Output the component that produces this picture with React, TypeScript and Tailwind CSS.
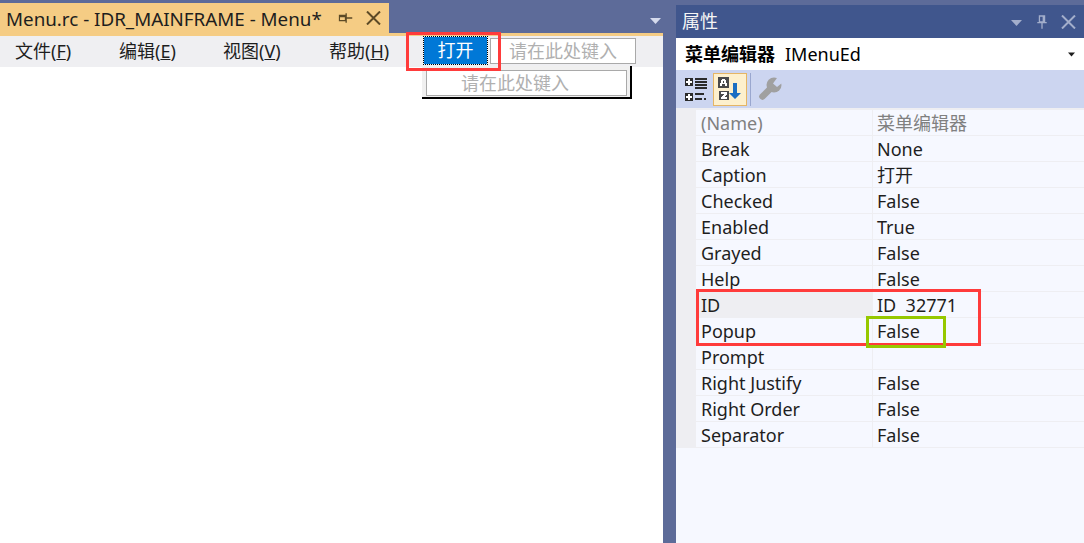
const menus = [
  { label: "文件(", key: "F", width: "w-[104px]" },
  { label: "编辑(", key: "E", width: "w-[104px]" },
  { label: "视图(", key: "V", width: "w-[106px]" },
  { label: "帮助(", key: "H", width: "w-[70px]" },
];

const props = [
  { name: "(Name)", value: "菜单编辑器", muted: true },
  { name: "Break", value: "None" },
  { name: "Caption", value: "打开" },
  { name: "Checked", value: "False" },
  { name: "Enabled", value: "True" },
  { name: "Grayed", value: "False" },
  { name: "Help", value: "False" },
  { name: "ID", value: "ID  32771", selected: true },
  { name: "Popup", value: "False" },
  { name: "Prompt", value: "" },
  { name: "Right Justify", value: "False" },
  { name: "Right Order", value: "False" },
  { name: "Separator", value: "False" },
];

function PinIcon({ className }: { className: string }) {
  return (
    <svg width="14" height="16" viewBox="0 0 14 16" className={className} fill="none" stroke="currentColor" strokeWidth="1.5">
      <path d="M4 1h6v7H4zM8.500 1v7M1.500 8.750h11M7 9v7" />
    </svg>
  );
}

function CloseIcon({ className }: { className: string }) {
  return (
    <svg width="15" height="14" viewBox="0 0 15 14" className={className} fill="none" stroke="currentColor" strokeWidth="2">
      <path d="M1 .5l13 13M14 .5l-13 13" />
    </svg>
  );
}

function Caret({ className }: { className: string }) {
  return (
    <svg width="11" height="6" viewBox="0 0 11 6" className={className} fill="currentColor">
      <path d="M0 0h11L5.500 6z" />
    </svg>
  );
}

function CategorizedIcon() {
  return (
    <svg width="22" height="23" viewBox="0 0 22 23" shapeRendering="crispEdges">
      <rect x="0" y="0" width="8" height="8" fill="#2b2b2b" />
      <rect x="1" y="3" width="6" height="2" fill="#fff" />
      <rect x="3" y="1" width="2" height="6" fill="#fff" />
      <rect x="0" y="15" width="8" height="8" fill="#2b2b2b" />
      <rect x="1" y="18" width="6" height="2" fill="#fff" />
      <rect x="3" y="16" width="2" height="6" fill="#fff" />
      <path d="M10 0h12v2H10zM10 3h12v2H10zM10 6h12v2H10zM10 9h12v2H10zM10 15h9v2h-9zM10 20h7v2h-7zM19 20h2v2h-2z" fill="#2b2b2b" />
    </svg>
  );
}

function SortIcon() {
  return (
    <svg width="24" height="24" viewBox="0 0 24 24" shapeRendering="crispEdges">
      <rect x="0" y="0" width="11" height="11" fill="#4a4a4a" />
      <rect x="1" y="14" width="10" height="9" fill="#4a4a4a" />
      <path d="M4 2h3v1h1v3h1v3H7V7H4v2H2V6h1V3h1zM5 4v2h1V4z" fill="#fff" />
      <path d="M3 15h6v2l-3 3h3v2H3v-2l3-3H3z" fill="#fff" />
      <path d="M15 6h4v10h4l-6 6-6-6h4z" fill="#1b6ec2" shapeRendering="auto" />
    </svg>
  );
}

function WrenchIcon() {
  return (
    <svg width="24" height="24" viewBox="0 0 24 24">
      <path d="M4.500 19.500L13 11" stroke="#a0a0a0" strokeWidth="6.500" strokeLinecap="round" fill="none" />
      <circle cx="16" cy="8" r="7.500" fill="#a0a0a0" />
      <path d="M15 6.500L19 1h5v5l-5 4z" fill="#ccd5f0" />
    </svg>
  );
}

export default function App() {
  return (
    <div
      className="relative flex h-[543px] w-[1084px] overflow-hidden bg-[#5d6b99] text-[18px] text-[#1e1e1e]"
      style={{ fontFamily: '"Noto Sans", "Noto Sans CJK SC", sans-serif' }}
    >
      {/* document pane */}
      <div className="flex w-[663px] flex-col pt-[3px]">
        <div className="flex h-[30px] items-center justify-between">
          <div className="flex h-full w-[389px] items-center bg-[#f5cc84] pl-[6px]">
            <span className="w-[333px] whitespace-nowrap pt-[2px] text-[18.8px] leading-none">Menu.rc - IDR_MAINFRAME - Menu*</span>
            <PinIcon className="h-[14px] w-[13px] -rotate-90 text-[#5c4a26]" />
            <CloseIcon className="ml-[14px] text-[#5c4a26]" />
          </div>
          <Caret className="mr-[2px] mt-[6px] text-[#d5daec]" />
        </div>
        <div className="h-[3px] bg-[#f5cc84]" />
        <div className="flex h-[31px] items-center bg-[#efeff2] pl-[15px]">
          {menus.map((m) => (
            <span key={m.key} className={`${m.width} whitespace-nowrap`}>
              {m.label}
              <span className="underline">{m.key}</span>)
            </span>
          ))}
        </div>
        <div className="flex-1 bg-white" />
      </div>

      {/* properties panel */}
      <div className="ml-[13px] mt-[5px] flex w-[408px] flex-col">
        <div className="flex h-[33px] items-center justify-between bg-[#40568d] pl-[6px] pr-[8px] text-[#f5f5f5]">
          <span>属性</span>
          <div className="flex items-center text-[#a3aecb]">
            <Caret className="mt-[2px]" />
            <PinIcon className="ml-[14px] h-[14px] w-[12px]" />
            <CloseIcon className="ml-[13px]" />
          </div>
        </div>
        <div className="flex h-[32px] items-center justify-between bg-white pl-[9px] pr-[9px] text-black">
          <span>
            <span className="font-bold">菜单编辑器</span>
            <span className="ml-[10px]">IMenuEd</span>
          </span>
          <Caret className="h-[5px] w-[7px] text-[#1e1e1e]" />
        </div>
        <div className="flex h-[38px] items-center bg-[#ccd5f0] pl-[9px]">
          <CategorizedIcon />
          <div className="ml-[6px] flex h-[33px] w-[34px] items-center justify-center border border-[#e5b565] bg-[#fdf0cd]">
            <SortIcon />
          </div>
          <div className="ml-[3px] h-[33px] w-px bg-[#9aa7cf]" />
          <div className="ml-[7px] flex items-center">
            <WrenchIcon />
          </div>
        </div>
        <div className="flex flex-1 flex-col bg-[#f6f8ff]">
          <div className="flex bg-[#eeeef2] pl-[20px]">
            <div className="flex-1 pt-[2px]">
              {props.map((p) => (
                <div key={p.name} className="flex h-[26px] items-center border-b border-[#eeeef2] bg-[#f6f8ff] leading-none">
                  <div
                    className={`flex h-full w-[177px] shrink-0 items-center border-r border-[#eeeef2] pl-[5px] ${
                      p.selected ? "bg-[#eeeef2]" : ""
                    } ${p.muted ? "text-[#808080]" : ""}`}
                  >
                    {p.name}
                  </div>
                  <div className={`whitespace-pre pl-[4px] ${p.muted ? "text-[#808080]" : ""}`}>{p.value}</div>
                </div>
              ))}
            </div>
          </div>
        </div>
      </div>

      {/* menu editor overlays */}
      <div className="absolute left-[424px] top-[37px] flex h-[27px] w-[63px] items-center justify-center bg-[#0078d7] text-white outline-1 outline-dotted outline-black">
        打开
      </div>
      <div className="absolute left-[490px] top-[38px] flex h-[26px] w-[146px] items-center justify-center border border-[#a9a9a9] bg-white text-[#b0b0b0]">
        请在此处键入
      </div>
      <div className="absolute left-[422px] top-[66px] h-[33px] w-[210px] border-b-2 border-r-2 border-black bg-[#f0f0f0] pl-[4px] pt-[4px]">
        <div className="flex h-[26px] w-[201px] items-center border border-[#a9a9a9] bg-white pl-[34px] text-[#b0b0b0]">
          请在此处键入
        </div>
      </div>

      {/* annotations */}
      <div className="absolute left-[406px] top-[32px] h-[39px] w-[95px] border-[3px] border-[#ff3b3b]" />
      <div className="absolute left-[696px] top-[289px] h-[57px] w-[285px] border-[3px] border-[#ff3b3b]" />
      <div className="absolute left-[866px] top-[316px] h-[32px] w-[80px] border-[3px] border-[#96c800]" />
    </div>
  );
}
